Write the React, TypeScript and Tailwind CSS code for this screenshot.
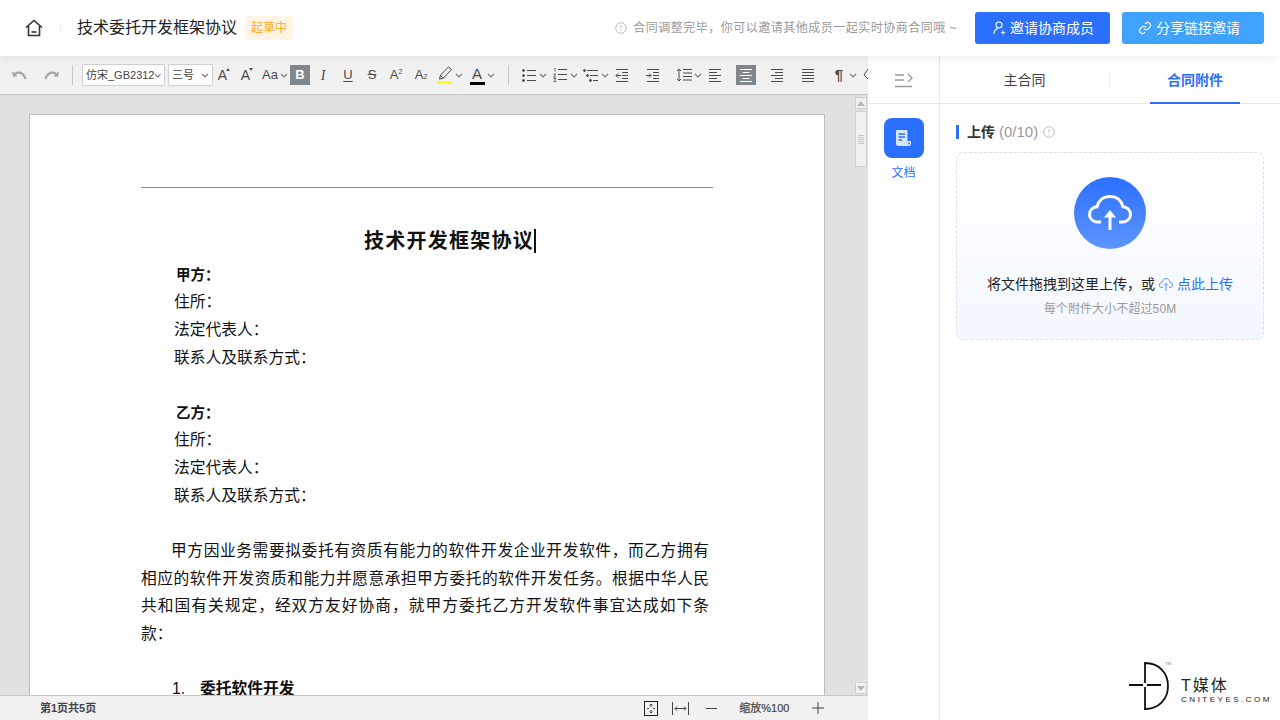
import type { ReactNode } from "react";

const gray = "#4a4a4a";

function Caret() {
  return (
    <svg width="8" height="5" viewBox="0 0 8 5" fill="none" stroke="#777" strokeWidth="1.2">
      <path d="M1 1l3 3 3-3" />
    </svg>
  );
}

// horizontal rule icons share the same 14x13 box
function Lines({ rows }: { rows: [number, number][] }) {
  return (
    <svg width="14" height="13" viewBox="0 0 14 13" stroke={gray} strokeWidth="1">
      {rows.map(([x1, x2], i) => (
        <path key={i} d={`M${x1} ${i * 3 + 0.5}H${x2}`} />
      ))}
    </svg>
  );
}

function Bullets() {
  return (
    <svg width="14" height="13" viewBox="0 0 14 13" fill={gray} stroke={gray}>
      <circle cx="1.5" cy="1.5" r="1" />
      <circle cx="1.5" cy="6.5" r="1" />
      <circle cx="1.5" cy="11.5" r="1" />
      <path d="M5 1.5h9M5 6.5h9M5 11.5h9" strokeWidth="1" />
    </svg>
  );
}

function Numbers() {
  return (
    <svg width="14" height="14" viewBox="0 0 14 14" fill="none" stroke={gray}>
      <path d="M1 1l1-.5v3M.5 6h2.5L.5 9h2.5M.5 10.5H3L1.5 12 3 13.5H.5" strokeWidth=".8" />
      <path d="M5 1.5h9M5 6.5h9M5 11.5h9" strokeWidth="1" />
    </svg>
  );
}

function MultiList() {
  return (
    <svg width="16" height="13" viewBox="0 0 16 13" fill={gray} stroke={gray}>
      <circle cx="1.5" cy="1.5" r="1" />
      <circle cx="4.5" cy="6.5" r="1" />
      <circle cx="7.5" cy="11.5" r="1" />
      <path d="M4 1.5h11M7 6.5h8M10 11.5h5" strokeWidth="1" />
    </svg>
  );
}

function Indent({ out }: { out?: boolean }) {
  return (
    <svg width="14" height="13" viewBox="0 0 14 13" fill="none" stroke={gray}>
      <path d="M1 .5h12M7 3.5h6M7 6.5h6M7 9.5h6M1 12.5h12" />
      <path d={out ? "M6 6.5H1M3 4.5l-2 2 2 2" : "M0 6.5h5M3 4.5l2 2-2 2"} />
    </svg>
  );
}

function LineHeight() {
  return (
    <svg width="16" height="14" viewBox="0 0 16 14" fill="none" stroke={gray}>
      <path d="M3 1v12M1 3l2-2 2 2M1 11l2 2 2-2" />
      <path d="M7 1.5h9M7 5h9M7 8.5h9M7 12h9" />
    </svg>
  );
}

function Pen() {
  return (
    <svg width="16" height="19" viewBox="0 0 16 19" fill="none">
      <path d="M11.5 1l3 2.5-8 8.5-4 1.2 1-4z" stroke={gray} />
      <path d="M3.5 9.5l3 2.5" stroke={gray} />
      <rect x="0" y="15" width="15" height="3" fill="#ffff00" />
    </svg>
  );
}

function FontColor() {
  return (
    <span className="relative flex flex-col items-center w-[15px] h-[19px]">
      <span className="text-[15px] leading-[15px] text-[#4a4a4a]">A</span>
      <span className="absolute bottom-0 w-[15px] h-[3px] bg-black" />
    </span>
  );
}

function Grow({ up }: { up?: boolean }) {
  return (
    <span className="relative -ml-[3px] text-[14px] leading-none font-normal text-[#4a4a4a]">
      A
      <svg className="absolute -right-[3px] top-0" width="4" height="3" viewBox="0 0 5 4" fill="#4a4a4a">
        <path d={up ? "M2.5 0L5 4H0z" : "M0 0h5L2.5 4z"} />
      </svg>
    </span>
  );
}

function Tool({ className, children }: { className: string; children: ReactNode }) {
  return <div className={`flex h-5 shrink-0 items-center justify-center ${className}`}>{children}</div>;
}

function Toolbar() {
  return (
    <div className="flex h-[39px] shrink-0 items-center overflow-hidden border-b border-[#c8c8c8] bg-[#f1f1f1] pl-[9px]">
      <Tool className="w-5">
        <svg width="15" height="10" viewBox="0 0 16 10" fill="#a6a6a6">
          <path d="M0 1l1 6 5-1-2-1.5C7 2.5 11 3.500 13.500 9.500L15.500 9C13.500 2 7.500-.5 2.500 2.800z" />
        </svg>
      </Tool>
      <Tool className="ml-3 w-5">
        <svg width="15" height="10" viewBox="0 0 16 10" fill="#a6a6a6">
          <path d="M16 1l-1 6-5-1 2-1.500C9 2.500 5 3.500 2.500 9.500L.5 9C2.500 2 8.500-.5 13.500 2.800z" />
        </svg>
      </Tool>
      <div className="ml-[11px] h-5 w-px shrink-0 bg-[#c6c6c6]" />
      <div className="ml-[9px] flex h-[22px] w-[83px] shrink-0 items-center justify-between rounded-[2px] border border-[#cfcfcf] bg-white pl-[3px] pr-[2px] text-[11px] text-[#444]">
        <span className="whitespace-nowrap">仿宋_GB2312</span>
        <Caret />
      </div>
      <div className="ml-[3px] flex h-[22px] w-[45px] shrink-0 items-center justify-between rounded-[2px] border border-[#cfcfcf] bg-white pl-[3px] pr-[3px] text-[11px] text-[#444]">
        <span>三号</span>
        <Caret />
      </div>
      <Tool className="ml-px w-5">
        <Grow up />
      </Tool>
      <Tool className="ml-[3px] w-5">
        <Grow />
      </Tool>
      <Tool className="ml-[3px] w-5 text-[13px] text-[#4a4a4a]">Aa</Tool>
      <Tool className="w-2">
        <Caret />
      </Tool>
      <Tool className="ml-[2px] w-5 bg-[#7f868c] text-[13px] font-bold text-white">B</Tool>
      <Tool className="ml-[3px] w-5 font-['Liberation_Serif',serif] text-[14px] italic text-[#4a4a4a]">I</Tool>
      <Tool className="ml-[5px] w-5 text-[13px] text-[#4a4a4a] underline underline-offset-2">U</Tool>
      <Tool className="ml-1 w-5 text-[13px] text-[#4a4a4a] line-through">S</Tool>
      <Tool className="ml-1 w-5 text-[13px] text-[#4a4a4a]">
        A<sup className="text-[7px]">2</sup>
      </Tool>
      <Tool className="ml-[5px] w-5 text-[13px] text-[#4a4a4a]">
        A<sub className="text-[7px]">2</sub>
      </Tool>
      <Tool className="ml-1 w-5">
        <Pen />
      </Tool>
      <Tool className="w-2">
        <Caret />
      </Tool>
      <Tool className="ml-1 w-5">
        <FontColor />
      </Tool>
      <Tool className="w-2">
        <Caret />
      </Tool>
      <div className="ml-[13px] h-5 w-px shrink-0 bg-[#c6c6c6]" />
      <Tool className="ml-[10px] w-5">
        <Bullets />
      </Tool>
      <Tool className="w-2">
        <Caret />
      </Tool>
      <Tool className="ml-[3px] w-5">
        <Numbers />
      </Tool>
      <Tool className="w-2">
        <Caret />
      </Tool>
      <Tool className="ml-[3px] w-5">
        <MultiList />
      </Tool>
      <Tool className="w-2">
        <Caret />
      </Tool>
      <Tool className="ml-[3px] w-5">
        <Indent out />
      </Tool>
      <Tool className="ml-[11px] w-5">
        <Indent />
      </Tool>
      <Tool className="ml-[11px] w-5">
        <LineHeight />
      </Tool>
      <Tool className="w-2">
        <Caret />
      </Tool>
      <Tool className="ml-[3px] w-5">
        <Lines rows={[[1, 13], [1, 9], [1, 13], [1, 9], [1, 13]]} />
      </Tool>
      <Tool className="ml-[11px] w-5 bg-[#7f868c]">
        <svg width="14" height="13" viewBox="0 0 14 13" stroke="#fff">
          <path d="M1 .5h12M3.500 3.500h7M1 6.500h12M3.500 9.500h7M1 12.500h12" />
        </svg>
      </Tool>
      <Tool className="ml-[11px] w-5">
        <Lines rows={[[1, 13], [5, 13], [1, 13], [5, 13], [1, 13]]} />
      </Tool>
      <Tool className="ml-[11px] w-5">
        <Lines rows={[[1, 13], [1, 13], [1, 13], [1, 13], [1, 13]]} />
      </Tool>
      <Tool className="ml-[11px] w-5 text-[15px] font-bold text-[#4a4a4a]">¶</Tool>
      <Tool className="w-2">
        <Caret />
      </Tool>
      <Tool className="ml-[2px] w-5">
        <svg width="14" height="14" viewBox="0 0 14 14" fill="none" stroke={gray}>
          <path d="M6 1l6 6-5 5-5-5z" />
        </svg>
      </Tool>
    </div>
  );
}

function ScrollBar() {
  return (
    <div className="mr-px flex w-[12px] shrink-0 flex-col justify-between pb-px pt-[2px]">
      <div className="flex flex-col gap-[2px]">
        <div className="flex h-[12px] items-center justify-center border border-[#cfcfcf] bg-[#f1f1f1]">
          <div className="h-0 w-0 border-x-4 border-b-[5px] border-x-transparent border-b-[#b5b5b5]" />
        </div>
        <div className="flex h-[56px] flex-col items-center justify-center gap-px border border-[#cfcfcf] bg-[#f1f1f1]">
          <div className="h-px w-[6px] bg-[#c8c8c8]" />
          <div className="h-px w-[6px] bg-[#c8c8c8]" />
          <div className="h-px w-[6px] bg-[#c8c8c8]" />
          <div className="h-px w-[6px] bg-[#c8c8c8]" />
          <div className="h-px w-[6px] bg-[#c8c8c8]" />
        </div>
      </div>
      <div className="flex h-[12px] items-center justify-center border border-[#cfcfcf] bg-[#f1f1f1]">
        <div className="h-0 w-0 border-x-4 border-t-[5px] border-x-transparent border-t-[#b5b5b5]" />
      </div>
    </div>
  );
}

const partyLines = ["住所：", "法定代表人：", "联系人及联系方式："];

const intro = [
  "相应的软件开发资质和能力并愿意承担甲方委托的软件开发任务。根据中华人民",
  "共和国有关规定，经双方友好协商，就甲方委托乙方开发软件事宜达成如下条",
];

function Party({ name }: { name: string }) {
  return (
    <div>
      <div className="ml-[35px] h-[26px] text-[14.500px] font-bold leading-[26px]">{name}</div>
      {partyLines.map((line) => (
        <div key={line} className="ml-[33px] h-7 text-[15.750px] leading-7">
          {line}
        </div>
      ))}
    </div>
  );
}

function Page() {
  return (
    <div className="ml-[29px] mt-[19px] h-[900px] w-[796px] shrink-0 border border-[#bdbdbd] bg-white px-[111px] pt-[72px] text-[#111]">
      <div className="h-px bg-[#8a8a8a]" />
      <div className="ml-[223px] mt-[41px] flex h-6 w-fit items-center border-r-2 border-[#111] text-[20px] font-bold tracking-[1.250px]">
        技术开发框架协议
      </div>
      <div className="mt-[9px]">
        <Party name="甲方：" />
        <div className="h-7" />
        <Party name="乙方：" />
      </div>
      <div className="mt-[27px] pr-1 text-[15.750px] leading-[27.500px]">
        <div className="pl-[30px] [text-align-last:justify]">甲方因业务需要拟委托有资质有能力的软件开发企业开发软件，而乙方拥有</div>
        {intro.map((line) => (
          <div key={line} className="[text-align-last:justify]">
            {line}
          </div>
        ))}
        <div>款：</div>
      </div>
      <div className="ml-[31px] mt-7 flex items-center text-[15.750px] leading-7">
        <span className="w-[28px]">1.</span>
        <span className="font-bold">委托软件开发</span>
      </div>
    </div>
  );
}

function StatusBar() {
  return (
    <div className="flex h-[25px] shrink-0 items-center border-t border-[#c8c8c8] bg-[#f1f1f1] pl-10 text-[11px] font-bold text-[#444]">
      <span>第1页共5页</span>
      <svg className="ml-[548px]" width="14" height="15" viewBox="0 0 14 15" fill="none" stroke="#222">
        <rect x=".5" y=".5" width="13" height="14" />
        <path d="M7 3v3M7 9v3M5.500 4.500L7 3l1.500 1.500M5.500 10.500L7 12l1.500-1.500M3 7.500h2M9 7.500h2" strokeWidth=".8" />
      </svg>
      <svg className="ml-[14px]" width="17" height="13" viewBox="0 0 17 13" fill="none" stroke="#444">
        <path d="M.5 0v13M16.500 0v13M3 6.500h11M5 4.500l-2 2 2 2M12 4.500l2 2-2 2" />
      </svg>
      <svg className="ml-[17px]" width="11" height="1" viewBox="0 0 11 1" stroke="#444">
        <path d="M0 .5h11" />
      </svg>
      <span className="ml-[22px] w-[52px] font-normal [-webkit-text-stroke:0.2px]">缩放%100</span>
      <svg className="ml-[21px]" width="12" height="12" viewBox="0 0 12 12" stroke="#444">
        <path d="M0 6h12M6 0v12" />
      </svg>
    </div>
  );
}

function InfoIcon() {
  return (
    <svg width="12" height="12" viewBox="0 0 12 12" fill="none" stroke="#bdbdbd">
      <circle cx="6" cy="6" r="5.300" />
      <path d="M6 3v3.500M6 8v1" />
    </svg>
  );
}

function Header() {
  return (
    <header className="relative z-20 flex h-14 shrink-0 items-center bg-white pl-[25px] pr-4 shadow-[0_1px_12px_rgba(0,0,0,0.08)]">
      <svg width="18" height="18" viewBox="0 0 18 18" fill="none" stroke="#333" strokeWidth="1.600">
        <path d="M1 8.500L9 1.500l8 7" />
        <path d="M3.500 7v9.500h11V7" />
        <path d="M6.500 13h5" />
      </svg>
      <div className="ml-[17px] h-3 w-px bg-[#eeeeee]" />
      <h1 className="ml-4 text-[16px] font-normal text-[#222]">技术委托开发框架协议</h1>
      <span className="ml-2 flex h-6 w-12 items-center justify-center rounded-[3px] bg-[#fff3e3] text-[12px] text-[#ffab2e]">起草中</span>
      <div className="ml-auto flex items-center gap-[6px] text-[12px] tracking-[0.5px] text-[#999]">
        <InfoIcon />
        <span>合同调整完毕，你可以邀请其他成员一起实时协商合同哦 ~</span>
      </div>
      <button className="ml-[18px] flex h-8 w-[135px] items-center justify-center gap-1 rounded-[3px] bg-[#2b6fff] pl-[2px] text-[14px] text-white">
        <svg width="13" height="14" viewBox="0 0 13 14" fill="none" stroke="#fff" strokeWidth="1.100">
          <circle cx="6" cy="4" r="3" />
          <path d="M1 13c0-3 2-5 4-5.500M8 11.500h4M10 9.500v4" />
        </svg>
        邀请协商成员
      </button>
      <button className="ml-3 flex h-8 w-[142px] items-center justify-center gap-1 rounded-[3px] bg-[#40a2ff] pr-2 text-[14px] text-white">
        <svg width="14" height="14" viewBox="0 0 24 24" fill="none" stroke="#fff" strokeWidth="2">
          <path d="M10 13a5 5 0 0 0 7.500.5l3-3a5 5 0 0 0-7-7l-1.500 1.500" />
          <path d="M14 11a5 5 0 0 0-7.500-.5l-3 3a5 5 0 0 0 7 7l1.500-1.500" />
        </svg>
        分享链接邀请
      </button>
    </header>
  );
}

function SideRail() {
  return (
    <div className="flex w-[72px] shrink-0 flex-col items-center border-r border-[#e8e8e8]">
      <div className="flex h-12 w-full items-center justify-center border-b border-[#e8e8e8]">
        <svg width="18" height="16" viewBox="0 0 18 16" fill="none" stroke="#999" strokeWidth="1.300">
          <path d="M0 3h9M0 8h9M0 14.500h17" strokeWidth="1.300" />
          <path d="M13 2l4 4-4 4" />
        </svg>
      </div>
      <div className="mt-[14px] flex h-10 w-10 items-center justify-center rounded-lg bg-[#2b6fff]">
        <svg width="17" height="18" viewBox="0 0 17 18">
          <path d="M2 1h9.500a1 1 0 0 1 1 1v10h3.500v3a2 2 0 0 1-2 2H3a2 2 0 0 1-2-2V2a1 1 0 0 1 1-1z" fill="#d6e4ff" />
          <path d="M3.500 5h6.500M3.500 8h6.500M3.500 11h3.500" stroke="#2b6fff" strokeWidth="1.300" />
          <circle cx="14" cy="14.500" r="1" fill="#2b6fff" />
        </svg>
      </div>
      <span className="mt-[6px] text-[12px] leading-[18px] text-[#2b6fff]">文档</span>
    </div>
  );
}

function Tabs() {
  return (
    <div className="flex h-12 border-b border-[#e8e8e8] pt-px text-[14px]">
      <div className="flex w-[169px] items-center justify-center text-[#444]">主合同</div>
      <div className="my-auto h-3 w-px bg-[#e8e8e8]" />
      <div className="relative flex flex-1 items-center justify-center font-bold text-[#2b6fff]">
        合同附件
        <span className="absolute -bottom-px left-[40px] h-[2px] w-[90px] bg-[#2b6fff]" />
      </div>
    </div>
  );
}

function Dropzone() {
  return (
    <div className="mt-3 flex h-[188px] flex-col items-center rounded-lg border border-dashed border-[#dcdfe6] bg-gradient-to-b from-white to-[#f3f7ff]">
      <div className="mt-6 flex h-[72px] w-[72px] items-center justify-center rounded-full bg-gradient-to-b from-[#2b6fff] to-[#5d94ff]">
        <svg width="44" height="36" viewBox="0 0 44 36" fill="none" stroke="#fff" strokeWidth="3">
          <path d="M13 27H9.500C5 27 1.500 23.500 1.500 19.500C1.500 15 5 12 9 11.800C10.500 5.500 15.500 1.500 22 1.500C28.500 1.500 33.500 5.500 35 11.800C39 12 42.500 15 42.500 19.500C42.500 23.500 39 27 34.500 27H31" />
          <path d="M22 35V17" />
          <path d="M16 22.500L22 15L28 22.500z" fill="#fff" strokeWidth="0" />
        </svg>
      </div>
      <p className="mt-[25px] flex items-center text-[14px] leading-5 text-[#222]">
        将文件拖拽到这里上传，或
        <svg className="ml-1 mr-1" width="14" height="13" viewBox="0 0 14 13" fill="none" stroke="#5d94ff">
          <path d="M4 9.500H3C1.500 9.500.5 8.500.5 7 .5 5.500 1.500 4.500 3 4.500 3.500 2 5 .5 7 .5S10.500 2 11 4.500C12.500 4.500 13.500 5.500 13.500 7S12.500 9.500 11 9.500H10M7 13V5.500M5 7.500l2-2 2 2" />
        </svg>
        <span className="text-[#2b6fff]">点此上传</span>
      </p>
      <p className="mt-[5px] text-[12px] leading-5 tracking-[0.1px] text-[#999]">每个附件大小不超过50M</p>
    </div>
  );
}

function Watermark() {
  return (
    <div className="absolute bottom-[9px] right-2 flex items-center">
      <div className="relative">
        <svg className="block" width="42" height="50" viewBox="0 0 42 50" fill="none" stroke="#111" strokeWidth="1.800">
          <path d="M16 22V2C30 2 39 12 39 25S30 48 16 48V26" />
          <path d="M0 24h14M18 24h14" />
        </svg>
        <span className="absolute right-0 top-0 text-[4px] leading-[5px] text-[#777]">TM</span>
      </div>
      <div className="ml-[10px] mt-[9px] flex flex-col text-[#222]">
        <span className="text-[16px] leading-[18px] tracking-[2px]">T媒体</span>
        <span className="text-[8px] leading-[10px] tracking-[2.500px]">CNITEYES.COM</span>
      </div>
    </div>
  );
}

export default function App() {
  return (
    <div className="flex h-[720px] w-[1280px] flex-col overflow-hidden bg-white font-['Liberation_Sans','Noto_Sans_CJK_SC',sans-serif]">
      <Header />
      <div className="flex min-h-0 flex-1">
        <div className="flex w-[868px] shrink-0 flex-col">
          <Toolbar />
          <div className="flex min-h-0 flex-1 justify-between overflow-hidden bg-[#e1e1e1]">
            <Page />
            <ScrollBar />
          </div>
          <StatusBar />
        </div>
        <SideRail />
        <div className="relative flex-1">
          <Tabs />
          <div className="px-4 pt-5">
            <div className="flex h-4 items-center text-[14px]">
              <span className="h-[14px] w-[3px] bg-[#2b6fff]" />
              <span className="ml-2 font-bold text-[#333]">上传</span>
              <span className="ml-[4px] text-[15px] text-[#999]">(0/10)</span>
              <span className="ml-[5px] flex">
                <InfoIcon />
              </span>
            </div>
            <Dropzone />
          </div>
          <Watermark />
        </div>
      </div>
    </div>
  );
}
